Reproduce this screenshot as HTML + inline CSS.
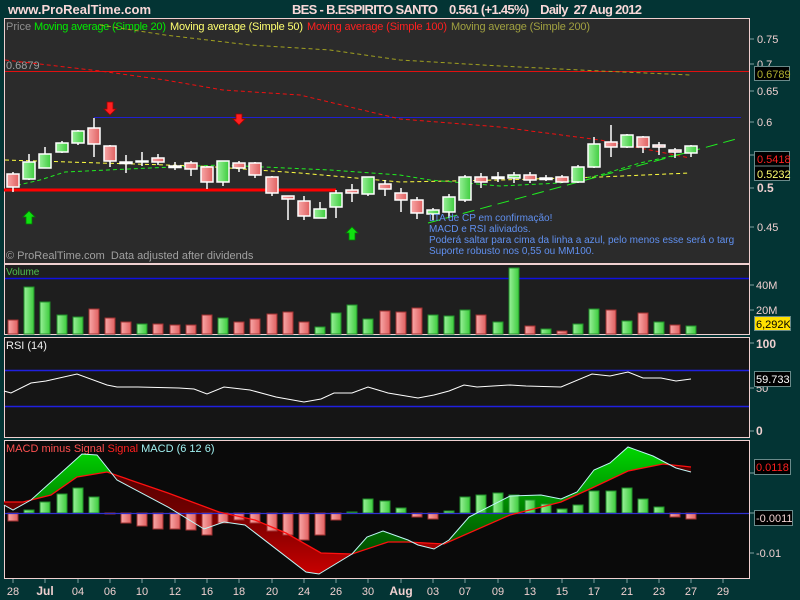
<!DOCTYPE html>
<html><head><meta charset="utf-8"><style>
html,body{margin:0;padding:0;background:#033434;}
svg{display:block;font-family:"Liberation Sans",sans-serif;}
text{white-space:pre;}
</style></head><body>
<svg width="800" height="600" viewBox="0 0 800 600" xmlns="http://www.w3.org/2000/svg" xml:space="preserve">
<defs>
<linearGradient id="gg" x1="0" x2="1" y1="0" y2="0"><stop offset="0" stop-color="#9af09a"/><stop offset="1" stop-color="#3ccc3c"/></linearGradient>
<linearGradient id="rg" x1="0" x2="1" y1="0" y2="0"><stop offset="0" stop-color="#f8a8a8"/><stop offset="1" stop-color="#e06060"/></linearGradient>
<linearGradient id="mg" x1="0" x2="0" y1="440" y2="580" gradientUnits="userSpaceOnUse"><stop offset="0" stop-color="#00e000"/><stop offset="0.5" stop-color="#008000"/><stop offset="1" stop-color="#003000"/></linearGradient>
<linearGradient id="mr" x1="0" x2="0" y1="440" y2="580" gradientUnits="userSpaceOnUse"><stop offset="0" stop-color="#400000"/><stop offset="0.5" stop-color="#700000"/><stop offset="1" stop-color="#d00000"/></linearGradient>
<clipPath id="above"><path d="M4,0 L4,502 L23,502 51,495 77,477 107,472 168,493 219,512 255,520 286,533 321,553 352,554 388,542 408,542 444,544 510,515 561,502 592,488 628,471 663,464 691,467 749,467 749,0 Z"/></clipPath>
</defs>
<rect width="800" height="600" fill="#033434"/>
<text x="8" y="14" fill="#f8d8d8" font-size="13" font-weight="bold">www.ProRealTime.com</text>
<text x="292" y="14" fill="#f8d8d8" font-size="13" font-weight="bold" textLength="350">BES - B.ESPIRITO SANTO    0.561 (+1.45%)    Daily  27 Aug 2012</text>

<rect x="4.5" y="18.5" width="745" height="245" fill="#2b2b2b" stroke="#f0d0d0"/>
<text x="6" y="30" font-size="11" fill="#909090">Price</text>
<text x="34" y="30" font-size="11" fill="#00ee00" textLength="132">Moving average (Simple 20)</text>
<text x="170" y="30" font-size="11" fill="#ffff70" textLength="133">Moving average (Simple 50)</text>
<text x="307" y="30" font-size="11" fill="#ff2020" textLength="140">Moving average (Simple 100)</text>
<text x="451" y="30" font-size="11" fill="#a0a040" textLength="139">Moving average (Simple 200)</text>
<line x1="5" y1="71.5" x2="749" y2="71.5" stroke="#e01010" stroke-width="1"/>
<text x="6" y="69" font-size="11" fill="#a0a0a0">0.6879</text>
<line x1="94" y1="117.5" x2="741" y2="117.5" stroke="#2020d0"/>
<line x1="4" y1="190" x2="336" y2="190" stroke="#ff0000" stroke-width="3"/>
<polyline fill="none" stroke="#a0a020" stroke-dasharray="4 3" points="100,25 165,35 250,45 330,50 400,60 500,66 600,71 690,75"/>
<polyline fill="none" stroke="#ee1010" stroke-dasharray="4 3" points="5,60 100,71 165,80 223,90 300,95 400,119 500,127 600,140 690,158"/>
<polyline fill="none" stroke="#ffff40" stroke-dasharray="4 3" points="5,160 100,163 200,166 300,173 400,182 500,180 600,177 690,173"/>
<polyline fill="none" stroke="#20ee20" stroke-dasharray="4 3" points="10,187 40,180 65,172 150,168 220,165 330,170 400,175 430,180 500,186 560,183 600,175 640,163 690,152"/>
<polyline fill="none" stroke="#20ee20" stroke-dasharray="12 6" points="428,223 740,138"/>
<g stroke="#ffffff" stroke-width="1.5">
<line x1="13" y1="172" x2="13" y2="192"/><rect x="7" y="174" width="12" height="13" fill="url(#rg)"/>
<line x1="29" y1="154" x2="29" y2="180"/><rect x="23" y="162" width="12" height="17" fill="url(#gg)"/>
<line x1="45" y1="147" x2="45" y2="168"/><rect x="39" y="154" width="12" height="14" fill="url(#gg)"/>
<line x1="62" y1="141" x2="62" y2="153"/><rect x="56" y="143" width="12" height="9" fill="url(#gg)"/>
<line x1="78" y1="130" x2="78" y2="145"/><rect x="72" y="131" width="12" height="12" fill="url(#gg)"/>
<line x1="94" y1="118" x2="94" y2="157"/><rect x="88" y="128" width="12" height="16" fill="url(#rg)"/>
<line x1="110" y1="145" x2="110" y2="167"/><rect x="104" y="146" width="12" height="15" fill="url(#rg)"/>
<line x1="126" y1="155" x2="126" y2="173"/><rect x="120" y="162" width="12" height="1.5" fill="#fff"/>
<line x1="142" y1="152" x2="142" y2="166"/><rect x="136" y="161" width="12" height="1" fill="#fff"/>
<line x1="158" y1="154" x2="158" y2="165"/><rect x="152" y="158" width="12" height="4" fill="url(#rg)"/>
<line x1="175" y1="162" x2="175" y2="170"/><rect x="169" y="166" width="12" height="1.5" fill="#fff"/>
<line x1="191" y1="161" x2="191" y2="176"/><rect x="185" y="163" width="12" height="6" fill="url(#rg)"/>
<line x1="207" y1="166" x2="207" y2="189"/><rect x="201" y="167" width="12" height="15" fill="url(#rg)"/>
<line x1="223" y1="161" x2="223" y2="186"/><rect x="217" y="161" width="12" height="21" fill="url(#gg)"/>
<line x1="239" y1="161" x2="239" y2="172"/><rect x="233" y="163" width="12" height="5" fill="url(#rg)"/>
<line x1="255" y1="162" x2="255" y2="178"/><rect x="249" y="163" width="12" height="12" fill="url(#rg)"/>
<line x1="272" y1="176" x2="272" y2="196"/><rect x="266" y="177" width="12" height="16" fill="url(#rg)"/>
<line x1="288" y1="196" x2="288" y2="220"/><rect x="282" y="196" width="12" height="3" fill="url(#rg)"/>
<line x1="304" y1="196" x2="304" y2="220"/><rect x="298" y="201" width="12" height="15" fill="url(#rg)"/>
<line x1="320" y1="202" x2="320" y2="218"/><rect x="314" y="209" width="12" height="9" fill="url(#gg)"/>
<line x1="336" y1="190" x2="336" y2="218"/><rect x="330" y="193" width="12" height="14" fill="url(#gg)"/>
<line x1="352" y1="184" x2="352" y2="202"/><rect x="346" y="190" width="12" height="3" fill="url(#rg)"/>
<line x1="368" y1="177" x2="368" y2="196"/><rect x="362" y="177" width="12" height="17" fill="url(#gg)"/>
<line x1="385" y1="180" x2="385" y2="196"/><rect x="379" y="184" width="12" height="5" fill="url(#rg)"/>
<line x1="401" y1="188" x2="401" y2="212"/><rect x="395" y="193" width="12" height="7" fill="url(#rg)"/>
<line x1="417" y1="197" x2="417" y2="219"/><rect x="411" y="200" width="12" height="13" fill="url(#rg)"/>
<line x1="433" y1="208" x2="433" y2="220"/><rect x="427" y="210" width="12" height="4" fill="url(#gg)"/>
<line x1="449" y1="194" x2="449" y2="218"/><rect x="443" y="197" width="12" height="15" fill="url(#gg)"/>
<line x1="465" y1="175" x2="465" y2="202"/><rect x="459" y="177" width="12" height="23" fill="url(#gg)"/>
<line x1="481" y1="173" x2="481" y2="188"/><rect x="475" y="177" width="12" height="5" fill="url(#rg)"/>
<line x1="498" y1="172" x2="498" y2="182"/><rect x="492" y="177" width="12" height="1.5" fill="#fff"/>
<line x1="514" y1="172" x2="514" y2="183"/><rect x="508" y="175" width="12" height="3" fill="url(#gg)"/>
<line x1="530" y1="172" x2="530" y2="183"/><rect x="524" y="175" width="12" height="5" fill="url(#rg)"/>
<line x1="546" y1="175" x2="546" y2="181"/><rect x="540" y="178" width="12" height="1.5" fill="#fff"/>
<line x1="562" y1="175" x2="562" y2="183"/><rect x="556" y="177" width="12" height="5" fill="url(#rg)"/>
<line x1="578" y1="165" x2="578" y2="183"/><rect x="572" y="167" width="12" height="15" fill="url(#gg)"/>
<line x1="594" y1="137" x2="594" y2="168"/><rect x="588" y="144" width="12" height="23" fill="url(#gg)"/>
<line x1="611" y1="125" x2="611" y2="157"/><rect x="605" y="142" width="12" height="5" fill="url(#rg)"/>
<line x1="627" y1="134" x2="627" y2="148"/><rect x="621" y="135" width="12" height="12" fill="url(#gg)"/>
<line x1="643" y1="136" x2="643" y2="153"/><rect x="637" y="137" width="12" height="10" fill="url(#rg)"/>
<line x1="659" y1="142" x2="659" y2="155"/><rect x="653" y="145" width="12" height="2" fill="url(#rg)"/>
<line x1="675" y1="148" x2="675" y2="158"/><rect x="669" y="150" width="12" height="2" fill="url(#rg)"/>
<line x1="691" y1="145" x2="691" y2="157"/><rect x="685" y="146" width="12" height="7" fill="url(#gg)"/>
</g>
<g stroke-width="0.8">
<path d="M107,102 h6 v7 h3 l-6,6 l-6,-6 h3 z" fill="#ff2020" stroke="#a00000"/>
<path d="M236,114 h6 v5 h3 l-6,6 l-6,-6 h3 z" fill="#ff2020" stroke="#a00000"/>
<path d="M29,211 l6,6 h-3 v7 h-6 v-7 h-3 z" fill="#10e010" stroke="#008000"/>
<path d="M352,227 l6,6 h-3 v7 h-6 v-7 h-3 z" fill="#10e010" stroke="#008000"/>
</g>
<g font-size="10" fill="#6090f0">
<text x="429" y="221">LTA de CP em confirmação!</text>
<text x="429" y="232">MACD e RSI aliviados.</text>
<text x="429" y="243">Poderá saltar para cima da linha a azul, pelo menos esse será o targ</text>
<text x="429" y="254">Suporte robusto nos 0,55 ou MM100.</text>
</g>
<text x="6" y="259" font-size="11" fill="#a0a0a0">© ProRealTime.com  Data adjusted after dividends</text>
<g font-size="11" fill="#f0d0d0">
<text x="757" y="43">0.75</text><text x="757" y="68">0.7</text><text x="757" y="95">0.65</text><text x="757" y="126">0.6</text><text x="757" y="192" font-weight="bold" font-size="12">0.5</text><text x="757" y="231">0.45</text>
</g>
<g stroke="#80a0a0"><line x1="750" y1="39" x2="754" y2="39"/><line x1="750" y1="64" x2="754" y2="64"/><line x1="750" y1="91" x2="754" y2="91"/><line x1="750" y1="122" x2="754" y2="122"/><line x1="750" y1="155" x2="754" y2="155"/><line x1="750" y1="188" x2="754" y2="188"/><line x1="750" y1="227" x2="754" y2="227"/></g>
<rect x="754.5" y="66.5" width="35" height="14" fill="#000" stroke="#6a8a8a"/>
<text x="757" y="78" font-size="11" fill="#b0b030">0.6789</text>
<rect x="754.5" y="151.5" width="35" height="29" fill="#000" stroke="#6a8a8a"/>
<line x1="755" y1="166" x2="789" y2="166" stroke="#6a8a8a"/>
<text x="757" y="163" font-size="11" fill="#ff2020">0.5418</text>
<text x="757" y="178" font-size="11" fill="#ffff70">0.5232</text>

<rect x="4.5" y="264.5" width="745" height="70" fill="#1e1e1e" stroke="#f0d0d0"/>
<text x="6" y="275" font-size="10" fill="#50c050">Volume</text>
<line x1="5" y1="278.5" x2="749" y2="278.5" stroke="#1010e0" stroke-width="1.5"/>
<g stroke-width="1">
<rect x="8" y="320" width="10" height="14" fill="url(#rg)" stroke="#a03030"/>
<rect x="24" y="287" width="10" height="47" fill="url(#gg)" stroke="#20902a"/>
<rect x="40" y="302" width="10" height="32" fill="url(#gg)" stroke="#20902a"/>
<rect x="57" y="315" width="10" height="19" fill="url(#gg)" stroke="#20902a"/>
<rect x="73" y="317" width="10" height="17" fill="url(#gg)" stroke="#20902a"/>
<rect x="89" y="309" width="10" height="25" fill="url(#rg)" stroke="#a03030"/>
<rect x="105" y="318" width="10" height="16" fill="url(#rg)" stroke="#a03030"/>
<rect x="121" y="322" width="10" height="12" fill="url(#rg)" stroke="#a03030"/>
<rect x="137" y="324" width="10" height="10" fill="url(#gg)" stroke="#20902a"/>
<rect x="153" y="324" width="10" height="10" fill="url(#rg)" stroke="#a03030"/>
<rect x="170" y="325" width="10" height="9" fill="url(#rg)" stroke="#a03030"/>
<rect x="186" y="325" width="10" height="9" fill="url(#rg)" stroke="#a03030"/>
<rect x="202" y="315" width="10" height="19" fill="url(#rg)" stroke="#a03030"/>
<rect x="218" y="318" width="10" height="16" fill="url(#gg)" stroke="#20902a"/>
<rect x="234" y="322" width="10" height="12" fill="url(#rg)" stroke="#a03030"/>
<rect x="250" y="319" width="10" height="15" fill="url(#rg)" stroke="#a03030"/>
<rect x="267" y="314" width="10" height="20" fill="url(#rg)" stroke="#a03030"/>
<rect x="283" y="312" width="10" height="22" fill="url(#rg)" stroke="#a03030"/>
<rect x="299" y="322" width="10" height="12" fill="url(#rg)" stroke="#a03030"/>
<rect x="315" y="327" width="10" height="7" fill="url(#gg)" stroke="#20902a"/>
<rect x="331" y="313" width="10" height="21" fill="url(#gg)" stroke="#20902a"/>
<rect x="347" y="305" width="10" height="29" fill="url(#gg)" stroke="#20902a"/>
<rect x="363" y="319" width="10" height="15" fill="url(#gg)" stroke="#20902a"/>
<rect x="380" y="311" width="10" height="23" fill="url(#rg)" stroke="#a03030"/>
<rect x="396" y="312" width="10" height="22" fill="url(#rg)" stroke="#a03030"/>
<rect x="412" y="308" width="10" height="26" fill="url(#rg)" stroke="#a03030"/>
<rect x="428" y="315" width="10" height="19" fill="url(#gg)" stroke="#20902a"/>
<rect x="444" y="316" width="10" height="18" fill="url(#gg)" stroke="#20902a"/>
<rect x="460" y="310" width="10" height="24" fill="url(#gg)" stroke="#20902a"/>
<rect x="476" y="315" width="10" height="19" fill="url(#rg)" stroke="#a03030"/>
<rect x="493" y="322" width="10" height="12" fill="url(#gg)" stroke="#20902a"/>
<rect x="509" y="268" width="10" height="66" fill="url(#gg)" stroke="#20902a"/>
<rect x="525" y="326" width="10" height="8" fill="url(#rg)" stroke="#a03030"/>
<rect x="541" y="329" width="10" height="5" fill="url(#gg)" stroke="#20902a"/>
<rect x="557" y="331" width="10" height="3" fill="url(#rg)" stroke="#a03030"/>
<rect x="573" y="324" width="10" height="10" fill="url(#gg)" stroke="#20902a"/>
<rect x="589" y="309" width="10" height="25" fill="url(#gg)" stroke="#20902a"/>
<rect x="606" y="310" width="10" height="24" fill="url(#rg)" stroke="#a03030"/>
<rect x="622" y="321" width="10" height="13" fill="url(#gg)" stroke="#20902a"/>
<rect x="638" y="313" width="10" height="21" fill="url(#rg)" stroke="#a03030"/>
<rect x="654" y="322" width="10" height="12" fill="url(#gg)" stroke="#20902a"/>
<rect x="670" y="325" width="10" height="9" fill="url(#rg)" stroke="#a03030"/>
<rect x="686" y="326" width="10" height="8" fill="url(#gg)" stroke="#20902a"/>
</g>
<g stroke="#80a0a0"><line x1="750" y1="285" x2="754" y2="285"/><line x1="750" y1="310" x2="754" y2="310"/></g>
<text x="756" y="289" font-size="11" fill="#f0d0d0">40M</text>
<text x="756" y="314" font-size="11" fill="#f0d0d0">20M</text>
<rect x="754.5" y="316.5" width="36" height="14" fill="#ffe000" stroke="#6a8a8a"/>
<text x="756" y="328" font-size="11" fill="#000">6,292K</text>

<rect x="4.5" y="337.5" width="745" height="100" fill="#151515" stroke="#f0d0d0"/>
<text x="6" y="349" font-size="11" fill="#f0f0f0">RSI (14)</text>
<line x1="5" y1="370.5" x2="749" y2="370.5" stroke="#2020e0" stroke-width="1.5"/>
<line x1="5" y1="406.5" x2="749" y2="406.5" stroke="#2020e0" stroke-width="1.5"/>
<polyline fill="none" stroke="#ffffff" stroke-width="1" points="4,391 11,393 31,383 46,381 77,374 107,385 117,387 138,387 179,388 194,389 207,394 224,387 250,390 276,397 304,402 321,399 334,393 352,393 368,387 388,393 418,398 434,395 449,391 464,385 477,387 510,385 526,386 561,387 592,374 610,376 628,372 643,378 661,378 676,381 691,379"/>
<g font-size="12" font-weight="bold" fill="#f0d0d0"><text x="756" y="348">100</text><text x="756" y="392" font-weight="normal" font-size="11">50</text><text x="756" y="435">0</text></g>
<g stroke="#80a0a0"><line x1="750" y1="343" x2="754" y2="343"/><line x1="750" y1="388" x2="754" y2="388"/><line x1="750" y1="431" x2="754" y2="431"/></g>
<rect x="754.5" y="371.5" width="36" height="15" fill="#000" stroke="#6a8a8a"/>
<text x="756" y="383" font-size="11" fill="#ffffff">59.733</text>

<rect x="4.5" y="440.5" width="745" height="138" fill="#0a0a0a" stroke="#f0d0d0"/>
<text x="6" y="452" font-size="11"><tspan fill="#ff5050">MACD minus Signal </tspan><tspan fill="#ff2020">Signal </tspan><tspan fill="#a0f0f0">MACD (6 12 6)</tspan></text>
<path d="M4,505 L13,510 31,500 82,454 97,455 117,480 168,507 204,529 224,522 245,525 306,572 319,574 352,554 367,537 383,531 408,540 418,545 434,549 449,540 469,517 510,496 541,495 561,499 577,492 594,470 610,463 628,447 653,456 676,468 691,472 L691,467 663,464 628,471 592,488 561,502 510,515 444,544 408,542 388,542 352,554 321,553 286,533 255,520 219,512 168,493 107,472 77,477 51,495 23,502 4,502 Z" fill="url(#mr)" fill-rule="evenodd"/>
<path clip-path="url(#above)" d="M4,505 L13,510 31,500 82,454 97,455 117,480 168,507 204,529 224,522 245,525 306,572 319,574 352,554 367,537 383,531 408,540 418,545 434,549 449,540 469,517 510,496 541,495 561,499 577,492 594,470 610,463 628,447 653,456 676,468 691,472 L691,467 663,464 628,471 592,488 561,502 510,515 444,544 408,542 388,542 352,554 321,553 286,533 255,520 219,512 168,493 107,472 77,477 51,495 23,502 4,502 Z" fill="url(#mg)" fill-rule="evenodd"/>
<g stroke-width="1">
<rect x="8" y="513" width="10" height="8" fill="url(#rg)" stroke="#a03030"/>
<rect x="24" y="510" width="10" height="3" fill="url(#gg)" stroke="#20902a"/>
<rect x="40" y="502" width="10" height="11" fill="url(#gg)" stroke="#20902a"/>
<rect x="57" y="494" width="10" height="19" fill="url(#gg)" stroke="#20902a"/>
<rect x="73" y="488" width="10" height="25" fill="url(#gg)" stroke="#20902a"/>
<rect x="89" y="497" width="10" height="16" fill="url(#gg)" stroke="#20902a"/>
<rect x="105" y="513" width="10" height="1" fill="url(#rg)" stroke="#a03030"/>
<rect x="121" y="513" width="10" height="10" fill="url(#rg)" stroke="#a03030"/>
<rect x="137" y="513" width="10" height="13" fill="url(#rg)" stroke="#a03030"/>
<rect x="153" y="513" width="10" height="16" fill="url(#rg)" stroke="#a03030"/>
<rect x="170" y="513" width="10" height="16" fill="url(#rg)" stroke="#a03030"/>
<rect x="186" y="513" width="10" height="17" fill="url(#rg)" stroke="#a03030"/>
<rect x="202" y="513" width="10" height="22" fill="url(#rg)" stroke="#a03030"/>
<rect x="218" y="513" width="10" height="10" fill="url(#rg)" stroke="#a03030"/>
<rect x="234" y="513" width="10" height="7" fill="url(#rg)" stroke="#a03030"/>
<rect x="250" y="513" width="10" height="10" fill="url(#rg)" stroke="#a03030"/>
<rect x="267" y="513" width="10" height="18" fill="url(#rg)" stroke="#a03030"/>
<rect x="283" y="513" width="10" height="22" fill="url(#rg)" stroke="#a03030"/>
<rect x="299" y="513" width="10" height="27" fill="url(#rg)" stroke="#a03030"/>
<rect x="315" y="513" width="10" height="22" fill="url(#rg)" stroke="#a03030"/>
<rect x="331" y="513" width="10" height="7" fill="url(#rg)" stroke="#a03030"/>
<rect x="347" y="512" width="10" height="1" fill="url(#gg)" stroke="#20902a"/>
<rect x="363" y="499" width="10" height="14" fill="url(#gg)" stroke="#20902a"/>
<rect x="380" y="501" width="10" height="12" fill="url(#gg)" stroke="#20902a"/>
<rect x="396" y="508" width="10" height="5" fill="url(#gg)" stroke="#20902a"/>
<rect x="412" y="513" width="10" height="4" fill="url(#rg)" stroke="#a03030"/>
<rect x="428" y="513" width="10" height="6" fill="url(#rg)" stroke="#a03030"/>
<rect x="444" y="511" width="10" height="2" fill="url(#gg)" stroke="#20902a"/>
<rect x="460" y="497" width="10" height="16" fill="url(#gg)" stroke="#20902a"/>
<rect x="476" y="495" width="10" height="18" fill="url(#gg)" stroke="#20902a"/>
<rect x="493" y="493" width="10" height="20" fill="url(#gg)" stroke="#20902a"/>
<rect x="509" y="495" width="10" height="18" fill="url(#gg)" stroke="#20902a"/>
<rect x="525" y="500" width="10" height="13" fill="url(#gg)" stroke="#20902a"/>
<rect x="541" y="504" width="10" height="9" fill="url(#gg)" stroke="#20902a"/>
<rect x="557" y="509" width="10" height="4" fill="url(#gg)" stroke="#20902a"/>
<rect x="573" y="505" width="10" height="8" fill="url(#gg)" stroke="#20902a"/>
<rect x="589" y="491" width="10" height="22" fill="url(#gg)" stroke="#20902a"/>
<rect x="606" y="491" width="10" height="22" fill="url(#gg)" stroke="#20902a"/>
<rect x="622" y="488" width="10" height="25" fill="url(#gg)" stroke="#20902a"/>
<rect x="638" y="499" width="10" height="14" fill="url(#gg)" stroke="#20902a"/>
<rect x="654" y="507" width="10" height="6" fill="url(#gg)" stroke="#20902a"/>
<rect x="670" y="513" width="10" height="4" fill="url(#rg)" stroke="#a03030"/>
<rect x="686" y="513" width="10" height="6" fill="url(#rg)" stroke="#a03030"/>
</g>
<line x1="5" y1="513.5" x2="749" y2="513.5" stroke="#3030d0" stroke-width="1.2"/>
<polyline fill="none" stroke="#ff1010" stroke-width="1.3" points="4,502 23,502 51,495 77,477 107,472 168,493 219,512 255,520 286,533 321,553 352,554 388,542 408,542 444,544 510,515 561,502 592,488 628,471 663,464 691,467"/>
<polyline fill="none" stroke="#c0f8f8" stroke-width="1" points="4,505 13,510 31,500 82,454 97,455 117,480 168,507 204,529 224,522 245,525 306,572 319,574 352,554 367,537 383,531 408,540 418,545 434,549 449,540 469,517 510,496 541,495 561,499 577,492 594,470 610,463 628,447 653,456 676,468 691,472"/>
<g stroke="#80a0a0"><line x1="750" y1="473" x2="754" y2="473"/><line x1="750" y1="513" x2="754" y2="513"/><line x1="750" y1="553" x2="754" y2="553"/></g>
<rect x="754.5" y="459.5" width="36" height="15" fill="#000" stroke="#6a8a8a"/>
<text x="756" y="471" font-size="11" fill="#ff2020">0.0118</text>
<rect x="754.5" y="510.5" width="38" height="15" fill="#000" stroke="#6a8a8a"/>
<text x="756" y="522" font-size="11" fill="#f0d0d0">-0.0011</text>
<text x="756" y="557" font-size="11" fill="#f0d0d0">-0.01</text>

<g stroke="#80a0a0">
<line x1="13" y1="579" x2="13" y2="583"/><line x1="45" y1="579" x2="45" y2="583"/><line x1="78" y1="579" x2="78" y2="583"/><line x1="110" y1="579" x2="110" y2="583"/><line x1="142" y1="579" x2="142" y2="583"/><line x1="175" y1="579" x2="175" y2="583"/><line x1="207" y1="579" x2="207" y2="583"/><line x1="239" y1="579" x2="239" y2="583"/><line x1="272" y1="579" x2="272" y2="583"/><line x1="304" y1="579" x2="304" y2="583"/><line x1="336" y1="579" x2="336" y2="583"/><line x1="368" y1="579" x2="368" y2="583"/><line x1="401" y1="579" x2="401" y2="583"/><line x1="433" y1="579" x2="433" y2="583"/><line x1="465" y1="579" x2="465" y2="583"/><line x1="498" y1="579" x2="498" y2="583"/><line x1="530" y1="579" x2="530" y2="583"/><line x1="562" y1="579" x2="562" y2="583"/><line x1="594" y1="579" x2="594" y2="583"/><line x1="627" y1="579" x2="627" y2="583"/><line x1="659" y1="579" x2="659" y2="583"/><line x1="691" y1="579" x2="691" y2="583"/><line x1="723" y1="579" x2="723" y2="583"/>
</g>
<g font-size="11" fill="#f0d0d0" text-anchor="middle">
<text x="13" y="595">28</text><text x="45" y="595" font-weight="bold" font-size="12">Jul</text><text x="78" y="595">04</text><text x="110" y="595">06</text><text x="142" y="595">10</text><text x="175" y="595">12</text><text x="207" y="595">16</text><text x="239" y="595">18</text><text x="272" y="595">20</text><text x="304" y="595">24</text><text x="336" y="595">26</text><text x="368" y="595">30</text><text x="401" y="595" font-weight="bold" font-size="12">Aug</text><text x="433" y="595">03</text><text x="465" y="595">07</text><text x="498" y="595">09</text><text x="530" y="595">13</text><text x="562" y="595">15</text><text x="594" y="595">17</text><text x="627" y="595">21</text><text x="659" y="595">23</text><text x="691" y="595">27</text><text x="723" y="595">29</text>
</g>
</svg>
</body></html>
